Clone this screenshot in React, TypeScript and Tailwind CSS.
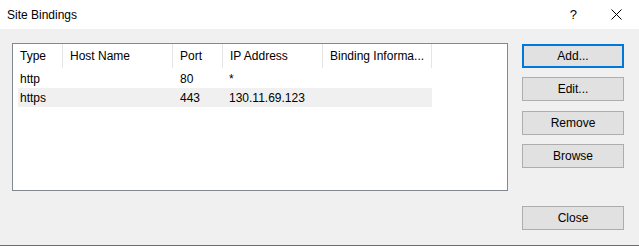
import React from "react"

const columns = [
  { label: "Type", width: "w-[50px]" },
  { label: "Host Name", width: "w-[110px]" },
  { label: "Port", width: "w-[50px]" },
  { label: "IP Address", width: "w-[100px]" },
  { label: "Binding Informa...", width: "w-[109px]" },
]

const bindings = [
  { type: "http", host: "", port: "80", ip: "*", info: "" },
  { type: "https", host: "", port: "443", ip: "130.11.69.123", info: "" },
]

const DialogButton = ({ label, focused }: { label: string; focused?: boolean }) => (
  <button
    className={
      "w-[102px] h-[24px] bg-[#e1e1e1] text-black flex items-center justify-center " +
      (focused ? "border-2 border-[#0078d7]" : "border border-[#adadad]")
    }
  >
    {label}
  </button>
)

export default function App() {
  return (
    <div
      className="w-[639px] h-[246px] bg-[#f0f0f0] flex flex-col border-b border-[#6d6d6d] text-[12px] text-black overflow-hidden"
      style={{ fontFamily: '"Liberation Sans", Arial, sans-serif' }}
    >
      {/* Title bar */}
      <div className="h-[29px] bg-white flex items-center shrink-0">
        <span className="pl-[7px]">Site Bindings</span>
        <span className="ml-auto mr-[34px] text-[13px]">?</span>
        <svg width="11" height="11" viewBox="0 0 11 11" className="mr-[17px]">
          <path d="M0.5 0.5 L10.5 10.5 M10.5 0.5 L0.5 10.5" stroke="#000" strokeWidth="1" />
        </svg>
      </div>

      {/* Body */}
      <div className="flex flex-1 pl-[12px] pt-[14px]">
        <div className="w-[496px] h-[148px] bg-white border border-[#828790] flex flex-col">
          <div className="flex h-[25px]">
            {columns.map((c) => (
              <div
                key={c.label}
                className={c.width + " h-[24px] flex items-center pl-[7px] border-r border-[#e5e5e5] whitespace-nowrap"}
              >
                {c.label}
              </div>
            ))}
          </div>
          <div className="pl-[5px]">
            {bindings.map((b, i) => (
              <div
                key={b.type}
                className={"flex h-[19px] items-center w-[414px] " + (i === 1 ? "bg-[#f0f0f0]" : "")}
              >
                <div className="w-[45px] pl-[2px]">{b.type}</div>
                <div className="w-[110px] pl-[7px]">{b.host}</div>
                <div className="w-[50px] pl-[7px]">{b.port}</div>
                <div className="w-[100px] pl-[6px]">{b.ip}</div>
                <div className="w-[109px] pl-[7px]">{b.info}</div>
              </div>
            ))}
          </div>
        </div>

        <div className="ml-[14px] mt-[1px] flex flex-col">
          <DialogButton label="Add..." focused />
          <div className="mt-[9px]">
            <DialogButton label="Edit..." />
          </div>
          <div className="mt-[10px]">
            <DialogButton label="Remove" />
          </div>
          <div className="mt-[9px]">
            <DialogButton label="Browse" />
          </div>
          <div className="mt-[38px]">
            <DialogButton label="Close" />
          </div>
        </div>
      </div>
    </div>
  )
}
